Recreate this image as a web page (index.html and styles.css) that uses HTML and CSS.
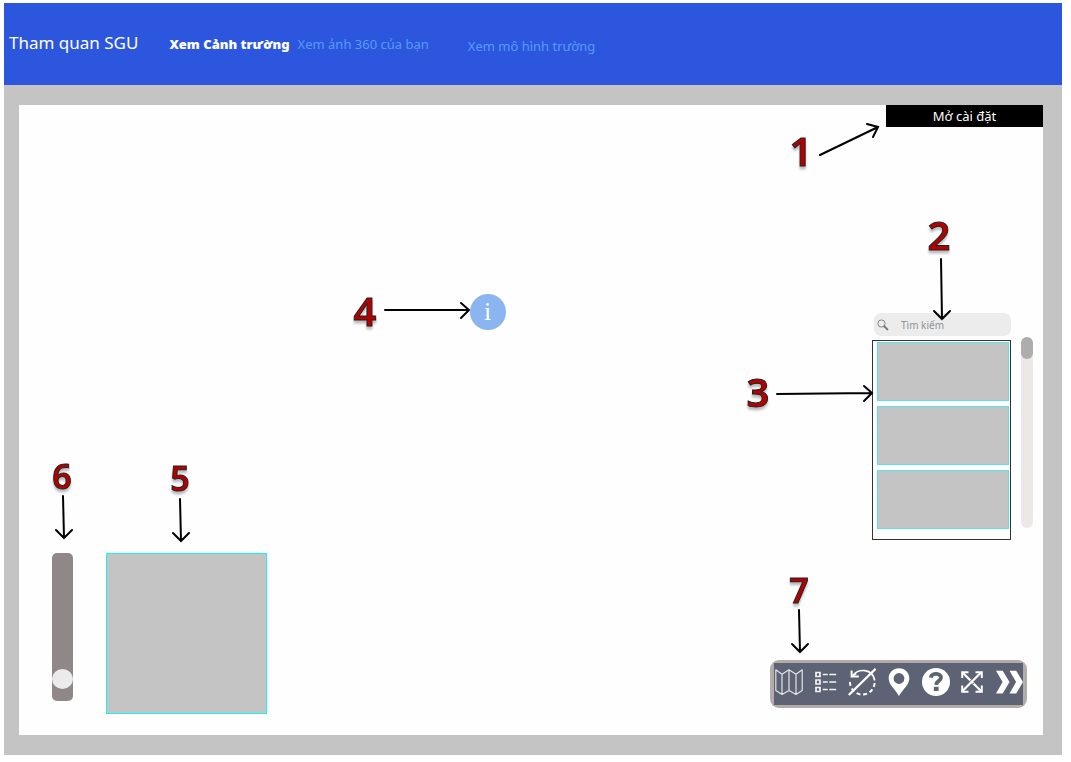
FILE: index.html
```html
<!DOCTYPE html>
<html lang="vi">
<head>
<meta charset="utf-8">
<meta name="viewport" content="width=device-width, initial-scale=1">
<title>Tham quan SGU</title>
<link rel="stylesheet" href="styles.css">
</head>
<body>
<header class="topbar">
  <h1 class="brand">Tham quan SGU</h1>
  <nav class="nav">
    <a class="nav-link nav-current" href="#canh-truong" aria-current="page">Xem Cảnh trường</a>
    <a class="nav-link nav-photo" href="#anh-360">Xem ảnh 360 của bạn</a>
    <a class="nav-link nav-model" href="#mo-hinh">Xem mô hình trường</a>
  </nav>
</header>

<main class="frame">
  <section class="stage">
    <div class="overview">
      <input class="zoom-slider" type="range" min="0" max="100" value="9" aria-label="Thu phóng">
      <div class="minimap"></div>
    </div>

    <button class="hotspot" type="button">i</button>

    <div class="side">
      <button class="settings" type="button">Mở cài đặt</button>

      <div class="browser">
        <div class="places">
          <label class="search">
            <svg class="search-icon" viewBox="0 0 12 12" aria-hidden="true">
              <circle cx="4.5" cy="4.5" r="3.6" fill="none" stroke="#858585" stroke-width="1"/>
              <path d="M7.2 7.2 10.4 10.4" stroke="#777" stroke-width="2" stroke-linecap="round"/>
            </svg>
            <input class="search-input" type="text" placeholder="Tìm kiếm" aria-label="Tìm kiếm">
          </label>
          <ul class="place-list">
            <li class="place"></li>
            <li class="place"></li>
            <li class="place"></li>
          </ul>
        </div>
        <div class="scroll-track"><div class="scroll-thumb"></div></div>
      </div>

      <div class="toolbar">
        <div class="tools">
          <button class="tool" type="button" aria-label="Bản đồ">
            <svg viewBox="0 0 28 28" fill="none" stroke="#e2e4e8" stroke-width="1.2" stroke-linejoin="round">
              <path d="M.8 1.8 7 6.2 14 1.8 21 6.2 27.2 1.8V22.4L21 26.4 14 22.4 7 26.4 .8 22.4ZM7 6.2V26.4M14 1.8V22.4M21 6.2V26.4"/>
            </svg>
          </button>
          <button class="tool" type="button" aria-label="Danh sách">
            <svg viewBox="0 0 28 28" fill="none" stroke="#f4f4f6" stroke-width="1.7">
              <path d="M4 4.5H8V8.5H4ZM4 12H8V16H4ZM4 19.5H8V23.5H4Z"/>
              <path d="M11.5 6.5H15M18 6.5H23.5M11.5 14H15M18 14H23.5M11.5 21.5H15M18 21.5H23.5" stroke-linecap="round"/>
            </svg>
          </button>
          <button class="tool" type="button" aria-label="Tắt tự xoay">
            <svg viewBox="0 0 28 28" fill="none" stroke="#fff" stroke-width="2">
              <path d="M4.5 8C10 .2 24.500 0 26.700 12.500" stroke-width="1.700"/>
              <path d="M3.600 2.500V8.600H10.800"/>
              <path d="M3.600 8.600 8 5.500"/>
              <path d="M26.600 15A12 12 0 0 1 2 13.500" stroke-dasharray="4 2.800"/>
              <path d="M.8 27 27.600.8" stroke-width="2.200"/>
            </svg>
          </button>
          <button class="tool" type="button" aria-label="Vị trí">
            <svg viewBox="0 0 28 28">
              <path fill="#fff" fill-rule="evenodd" d="M14 .3C8 .3 3.7 4.7 3.7 10.4 3.7 16.8 10.6 21.5 14 28 17.4 21.5 24.3 16.8 24.3 10.4 24.3 4.7 20 .3 14 .3ZM14 5.1A5.400 5.400 0 1 1 14 15.900 5.400 5.400 0 1 1 14 5.100Z"/>
            </svg>
          </button>
          <button class="tool" type="button" aria-label="Trợ giúp">
            <svg viewBox="0 0 28 28" fill="none">
              <circle cx="14" cy="14" r="14" fill="#fff"/>
              <path d="M8.7 9.7C9.8 4.2 19.4 4.8 18.9 10 18.6 13.2 14.4 12.6 14.2 16.8" stroke="#5d6374" stroke-width="3.8"/>
              <path d="M11.8 18.8H16.6V23H11.8Z" fill="#5d6374"/>
            </svg>
          </button>
          <button class="tool" type="button" aria-label="Toàn màn hình">
            <svg viewBox="0 0 28 28" fill="none" stroke="#fff" stroke-width="2">
              <path d="M4.5 4.5 23 23M23 4.5 4.5 23" stroke-width="2.2"/>
              <path d="M4.200 10V4.200H10.500M17.500 4.200H23.800V10M23.800 17.500V23.800H17.500M10.500 23.800H4.200V17.500"/>
              <path d="M12 13.500 13.200 12M14.800 16 16 14.500" stroke="#5d6374" stroke-width="1"/>
            </svg>
          </button>
          <button class="tool" type="button" aria-label="Thu gọn">
            <svg viewBox="0 0 28 28" fill="#fff">
              <path d="M1 2.800H7.700L14.500 14 7.700 25.400H1L7.600 14ZM14.500 2.800H21.200L28 14 21.200 25.400H14.500L21.100 14Z"/>
            </svg>
          </button>
        </div>
      </div>
    </div>
  </section>
</main>

<svg class="notes" width="1071" height="762" viewBox="0 0 1071 762">
  <g class="arrows">
    <path d="M820 155 878 127M867 124 878 127 873 137"/>
    <path d="M941 259 942 319M934 311 942 319 950 311"/>
    <path d="M777 394 872 393M864 386 872 393 864 401"/>
    <path d="M385 310H469M461 303 469 310 461 318"/>
    <path d="M180 499 181 541M173 533 181 541 189 533"/>
    <path d="M63 496 64 538M56 530 64 538 72 530"/>
    <path d="M799 610 800 652M792 644 800 652 808 644"/>
  </g>
  <g class="num num-large">
    <text x="801" y="166">1</text>
    <text x="939" y="250">2</text>
    <text x="758" y="407">3</text>
    <text x="365" y="326">4</text>
  </g>
  <g class="num num-small">
    <text x="180" y="491">5</text>
    <text x="62" y="489">6</text>
    <text x="799" y="603">7</text>
  </g>
</svg>
</body>
</html>
```
FILE: styles.css
```css
* {
  box-sizing: border-box;
}

body {
  position: relative;
  display: flex;
  flex-direction: column;
  min-height: 100vh;
  margin: 0;
  padding: 3px 9px 7px 4px;
  background: #fff;
  font-family: "Noto Sans", "Open Sans", sans-serif;
}

button {
  padding: 0;
  border: 0;
  font-family: inherit;
  cursor: pointer;
}

.topbar {
  display: flex;
  align-items: center;
  gap: 31px;
  height: 82px;
  padding: 0 0 2px 5px;
  background: #2d56df;
}

.brand {
  margin: 0;
  color: #fff;
  font-size: 17px;
  font-weight: 400;
  line-height: 24px;
}

.nav {
  display: flex;
  align-items: center;
  padding-top: 2px;
}

.nav-link {
  color: #559cf8;
  font-size: 13px;
  line-height: 20px;
  text-decoration: none;
  white-space: nowrap;
}

.nav-current {
  color: #fff;
  font-weight: 900;
}

.nav-photo {
  margin-left: 8px;
}

.nav-model {
  margin-left: 39px;
  padding-top: 4px;
}

.frame {
  display: flex;
  flex: 1;
  padding: 20px 19px 20px 15px;
  background: #c4c4c4;
}

.stage {
  position: relative;
  display: flex;
  flex: 1;
  justify-content: space-between;
  background: #fefefe;
}

.overview {
  display: flex;
  align-self: flex-end;
  gap: 33px;
  padding: 0 0 21px 33px;
}

.zoom-slider {
  width: 21px;
  height: 148px;
  margin: 0;
  border-radius: 5px;
  background: #908888;
  appearance: none;
  writing-mode: vertical-lr;
  direction: rtl;
}

.zoom-slider::-webkit-slider-thumb {
  width: 21px;
  height: 20px;
  border-radius: 50%;
  background: #ebebeb;
  appearance: none;
}

.minimap {
  width: 161px;
  height: 161px;
  border: 1px solid #14f6f8;
  background: #c4c4c4;
}

/* Pin on the panorama */
.hotspot {
  position: absolute;
  top: 30%;
  left: 44%;
  width: 36px;
  height: 36px;
  border-radius: 50%;
  background: #8ab5f0;
  color: #fff;
  font-family: "Liberation Serif", serif;
  font-size: 26px;
  line-height: 36px;
}

.side {
  display: flex;
  flex-direction: column;
  align-items: flex-end;
}

.settings {
  width: 157px;
  height: 22px;
  background: #000;
  color: #fff;
  font-size: 13px;
  line-height: 20px;
}

.browser {
  display: flex;
  gap: 10px;
  margin: 186px 10px 0 0;
}

.places {
  width: 139px;
}

.search {
  display: flex;
  align-items: center;
  gap: 12px;
  height: 23px;
  margin: 0 0 4px 2px;
  padding-left: 3px;
  border-radius: 7px;
  background: #ececec;
}

.search-icon {
  flex: none;
  width: 12px;
  height: 12px;
}

.search-input {
  flex: 1;
  min-width: 0;
  padding: 0;
  border: 0;
  outline: 0;
  background: none;
  font-family: inherit;
  font-size: 10px;
}

.search-input::placeholder {
  color: #929292;
  opacity: 1;
}

.place-list {
  display: flex;
  flex-direction: column;
  gap: 5px;
  height: 200px;
  margin: 0;
  padding: 1px 1px 0 4px;
  border: 1px solid #333;
  list-style: none;
}

.place {
  height: 59px;
  border: 1px solid #58e4e4;
  background: #c4c4c4;
}

.scroll-track {
  width: 12px;
  height: 191px;
  margin-top: 24px;
  border-radius: 6px;
  background: #ece8e8;
}

.scroll-thumb {
  height: 22px;
  border-radius: 6px;
  background: #adadad;
}

.toolbar {
  width: 257px;
  margin: 120px 16px 0 0;
  padding: 3px 4px;
  border-radius: 9px;
  background: #b3acaa;
}

.tools {
  display: flex;
  align-items: center;
  justify-content: space-between;
  height: 42px;
  padding: 0 0 4px 1px;
  background: #5d6374;
}

.tool {
  width: 28px;
  height: 28px;
  background: none;
}

.tool svg {
  display: block;
  width: 28px;
  height: 28px;
}

/* Numbered callouts drawn over the screen */
.notes {
  position: absolute;
  top: 0;
  left: 0;
  pointer-events: none;
}

.arrows {
  fill: none;
  stroke: #000;
  stroke-width: 2;
  stroke-linecap: round;
}

.num {
  fill: #b30000;
  stroke: #222;
  stroke-width: 1;
  font-family: "Noto Sans", "Open Sans", sans-serif;
  font-weight: 600;
  text-anchor: middle;
  filter: drop-shadow(0 3px 1px #bbb);
}

.num-large {
  font-size: 40px;
}

.num-small {
  font-size: 34px;
}
```
